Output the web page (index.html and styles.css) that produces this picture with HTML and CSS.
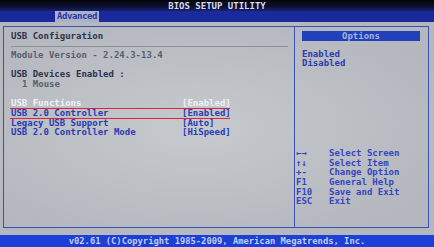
FILE: index.html
```html
<!DOCTYPE html>
<html lang="en">
<head>
    <meta charset="UTF-8">
    <title>BIOS Setup Utility</title>
    <link rel="stylesheet" href="styles.css">
</head>
<body>
    <div class="screen">
        <header class="top">BIOS SETUP UTILITY</header>
        <nav class="tabs">
            <span class="tab">Advanced</span>
        </nav>

        <main class="main">
            <div class="frame">
                <section class="left">
                    <div class="line title">USB Configuration</div>
                    <div class="line rule"></div>
                    <div class="line dim">Module Version - 2.24.3-13.4</div>
                    <div class="line"></div>
                    <div class="line title">USB Devices Enabled :</div>
                    <div class="line dim indent">1 Mouse</div>
                    <div class="line"></div>
                    <div class="line item current"><span class="name">USB Functions</span><span>[Enabled]</span></div>
                    <div class="line item marked"><span class="name">USB 2.0 Controller</span><span>[Enabled]</span></div>
                    <div class="line item"><span class="name">Legacy USB Support</span><span>[Auto]</span></div>
                    <div class="line item"><span class="name">USB 2.0 Controller Mode</span><span>[HiSpeed]</span></div>
                </section>

                <aside class="right">
                    <div class="options">Options</div>
                    <div class="choices">
                        <div class="line">Enabled</div>
                        <div class="line">Disabled</div>
                    </div>
                    <div class="help">
                        <div class="line"><span class="key">&larr;&rarr;</span>Select Screen</div>
                        <div class="line"><span class="key">&uarr;&darr;</span>Select Item</div>
                        <div class="line"><span class="key">+-</span>Change Option</div>
                        <div class="line"><span class="key">F1</span>General Help</div>
                        <div class="line"><span class="key">F10</span>Save and Exit</div>
                        <div class="line"><span class="key">ESC</span>Exit</div>
                    </div>
                </aside>
            </div>
        </main>

        <footer class="bottom">v02.61 (C)Copyright 1985-2009, American Megatrends, Inc.</footer>
    </div>
</body>
</html>
```

FILE: styles.css
```css
body {
    margin: 0;
    padding: 0;
    background-color: #05060c;
    font-family: "DejaVu Sans Mono", "Liberation Mono", monospace;
    font-weight: bold;
    font-size: 9px;
}

.screen {
    width: 434px;
    height: 247px;
    display: flex;
    flex-direction: column;
    overflow: hidden;
}

.top {
    height: 11px;
    line-height: 12px;
    text-align: center;
    color: #d8dcf0;
    background: linear-gradient(#04050a, #0a0e2c 55%, #16226e);
}

.tabs {
    height: 11px;
    background-color: #1a2a9c;
    padding-left: 55px;
    display: flex;
}

.tab {
    width: 44px;
    line-height: 11px;
    text-align: center;
    background-color: #aab2c8;
    color: #2a36a6;
    letter-spacing: -0.4px;
}

.main {
    flex: 1;
    background: radial-gradient(ellipse at 45% 50%, #c6c9cd, #b4b7bd 80%);
    padding: 4px 5px 7px 3px;
    display: flex;
}

.frame {
    flex: 1;
    display: flex;
    border: 1px solid #3a50b4;
}

.line {
    height: 9.7px;
    line-height: 9.7px;
    white-space: pre;
}

.left {
    width: 283px;
    padding: 4.6px 0 0 7px;
    border-right: 1px solid #3a50b4;
}

.title {
    color: #2c3350;
}

.dim {
    color: #586072;
}

.indent {
    padding-left: 11px;
}

.rule {
    display: flex;
    align-items: center;
    width: 277px;
}

.rule::before {
    content: "";
    flex: 1;
    border-top: 1px solid #8c9098;
}

.item {
    display: flex;
    color: #2a3cb4;
}

.item .name {
    width: 171px;
}

.current {
    color: #f0f2f6;
}

.marked {
    position: relative;
}

.marked::before {
    content: "";
    position: absolute;
    left: -1px;
    width: 220px;
    top: -1.5px;
    bottom: 0;
    border-top: 1.5px solid #d8283a;
    border-bottom: 1.5px solid #d8283a;
}

.right {
    flex: 1;
    display: flex;
    flex-direction: column;
    padding: 4px 8px 0 1px;
}

.options {
    margin-left: 6px;
    height: 10px;
    line-height: 10px;
    text-align: center;
    background-color: #2140ba;
    color: #a8b2dc;
}

.choices {
    margin-top: 8.6px;
    padding-left: 6px;
    color: #2a3cb0;
}

.help {
    margin-top: auto;
    padding-bottom: 20px;
    color: #3446c0;
}

.key {
    display: inline-block;
    width: 33px;
}

.bottom {
    height: 12px;
    line-height: 12px;
    text-align: center;
    background-color: #1a40d8;
    color: #c4ccf2;
    font-size: 8.8px;
}
```
